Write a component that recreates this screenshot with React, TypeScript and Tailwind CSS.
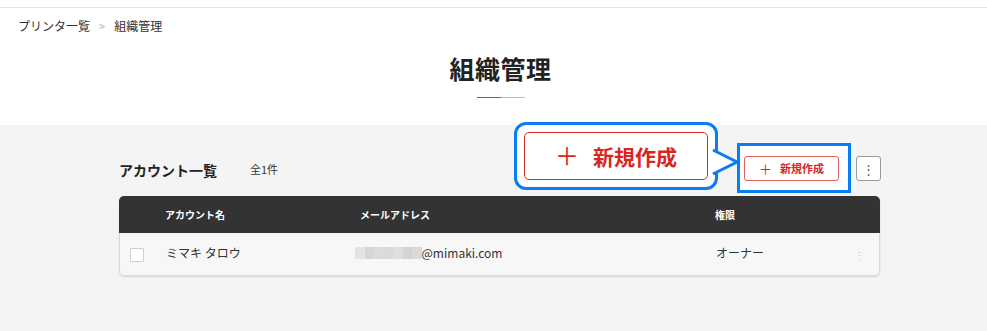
const font = "font-['Noto_Sans_CJK_JP','Noto_Sans',sans-serif]";

const BlurredText = () => {
  const blocks = ['#e3e3e3', '#d6d6d6', '#dcdcdc', '#d9d9d9', '#dedede', '#d3d3d3', '#dadada'];
  return (
    <div className="-ml-[6px] flex h-[12px]">
      {blocks.map((c, i) => (
        <div key={i} className="h-full w-[9.5px]" style={{ backgroundColor: c }} />
      ))}
    </div>
  );
};

export default function App() {
  return (
    <div className={`${font} w-[987px] h-[331px] overflow-hidden bg-[#f4f4f4] text-[#333]`}>
      {/* header strip */}
      <div className="h-[8px] bg-white border-b border-[#e2e2e2] shadow-[0_1px_2px_rgba(0,0,0,0.08)]" />

      {/* breadcrumb + title */}
      <div className="bg-white h-[117px] pt-[10px]">
        <div className="flex items-center px-[18px] text-[12px] leading-[16px] text-[#333]">
          <span>プリンタ一覧</span>
          <span className="mx-[9px] text-[11px] text-[#b0b0b0]">&gt;</span>
          <span>組織管理</span>
        </div>
        <div className="w-[1001px] flex flex-col items-center mt-[18px]">
          <h1 className="text-[25px] leading-[32px] font-bold text-[#222] tracking-[0.5px]">組織管理</h1>
          <div className="flex mt-[13px]">
            <div className="w-[24px] h-[1px] bg-[#f0302a]" />
            <div className="w-[24px] h-[1px] bg-[#bdbdbd]" />
          </div>
        </div>
      </div>

      {/* content */}
      <div className="w-[999px]">
        <div className="relative w-[761px] mx-auto pt-[31px]">
          <div className="flex items-center justify-between h-[25px]">
            <div className="flex items-center">
              <h2 className="text-[14px] font-bold leading-[20px] text-[#222] mt-[3px]">アカウント一覧</h2>
              <span className="ml-[33px] text-[11px] text-[#333] mt-[1px]">全1件</span>
            </div>
            <div className="flex items-center gap-[17px] -mr-[1px]">
              <div className="relative">
                {/* highlight annotation */}
                <div className="absolute -left-[7px] -top-[13px] -right-[12px] -bottom-[12px] border-[3px] border-[#0a7cf5] bg-white" />
                <button className="relative flex items-center justify-center gap-[8px] w-[95px] h-[25px] rounded-[3px] border border-[#e0605a] bg-white text-[11px] font-bold text-[#d9261f]">
                  <span className="font-normal text-[13px] leading-none">＋</span>
                  <span>新規作成</span>
                </button>
              </div>
              <button className="flex items-center justify-center w-[25px] h-[25px] rounded-[3px] border border-[#9a9a9a] bg-white text-[#666] text-[13px] leading-none">
                ⋮
              </button>
            </div>
          </div>

          {/* callout annotation */}
          <div className="absolute left-[395px] top-[-3px] w-[204px] h-[68px] rounded-[12px] border-[3px] border-[#0a7cf5] bg-white p-[7px]">
            <div className="flex items-center justify-center gap-[14px] h-full rounded-[5px] border border-[#d9302a] bg-white text-[#d9261f] font-bold">
              <span className="text-[24px] font-normal leading-none -mt-[2px]">＋</span>
              <span className="text-[21px] leading-none">新規作成</span>
            </div>
            <svg className="absolute left-[195px] top-[22px]" width="30" height="30" viewBox="0 0 30 30">
              <polygon points="0,3 26,15 0,27" fill="#fff" />
              <polyline points="1,3 25,15 1,27" fill="none" stroke="#0a7cf5" strokeWidth="3" strokeLinejoin="miter" />
            </svg>
          </div>

          {/* table */}
          <div className="mt-[15px] rounded-[5px] shadow-[0_1px_2px_rgba(0,0,0,0.12)]">
            <div className="grid grid-cols-[46px_195px_355px_1fr_40px] items-center h-[37px] rounded-t-[5px] bg-[#333] text-white text-[10px] font-bold">
              <div />
              <div>アカウント名</div>
              <div>メールアドレス</div>
              <div>権限</div>
              <div />
            </div>
            <div className="grid grid-cols-[46px_195px_355px_1fr_40px] items-center h-[43px] rounded-b-[5px] border border-t-0 border-[#d8d8d8] bg-[#f7f7f7] text-[12px] text-[#333]">
              <div className="pl-[10px]">
                <div className="w-[14px] h-[14px] border border-[#cfcfcf] bg-white rounded-[1px] mt-[1px]" />
              </div>
              <div className="-mt-[3px]">ミマキ タロウ</div>
              <div className="flex items-center -mt-[3px]">
                <BlurredText />
                <span className="text-[12px]">@mimaki.com</span>
              </div>
              <div className="-mt-[3px]">オーナー</div>
              <div className="flex justify-center text-[#c4c4c4] text-[11px] mt-[3px]">⋮</div>
            </div>
          </div>
        </div>
      </div>
    </div>
  );
}
